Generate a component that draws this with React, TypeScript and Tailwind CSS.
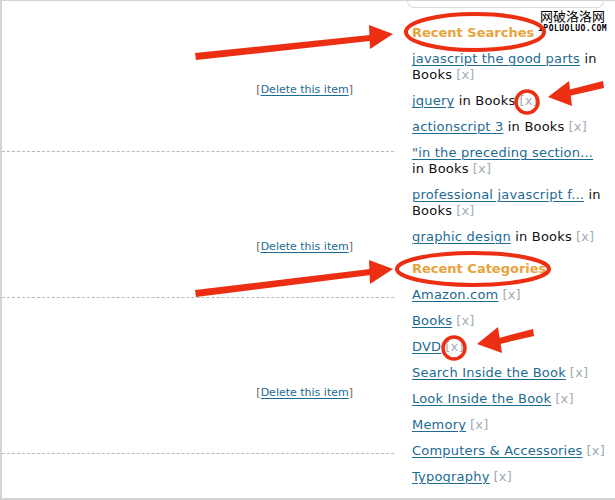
import React from 'react';

const link = 'text-[#1d6a93] underline decoration-1 underline-offset-2';
const xBtn = 'text-[#a3acb3] ml-1';

const searches = [
  'javascript the good parts',
  'jquery',
  'actionscript 3',
  '"in the preceding section...',
  'professional javascript f...',
  'graphic design',
];

const categories = [
  'Amazon.com',
  'Books',
  'DVD',
  'Search Inside the Book',
  'Look Inside the Book',
  'Memory',
  'Computers & Accessories',
  'Typography',
];

const DeleteItem: React.FC<{ top: string }> = ({ top }) => (
  <div className={`flex justify-end pr-[41px] ${top} text-[11px] leading-[14px]`}>
    <span className="text-[#666]">[</span>
    <a className={link}>Delete this item</a>
    <span className="text-[#666]">]</span>
  </div>
);

const Annotations = () => (
  <svg className="absolute inset-0 pointer-events-none" width="615" height="500" viewBox="0 0 615 500">
    <g fill="#ec2f12" stroke="none">
      <polygon points="193,52 368,34 368,40 194,59" />
      <polygon points="367,24 391,33 368,48" />
      <polygon points="193,289 368,268 369,274 194,296" />
      <polygon points="367,259 391,268 368,283" />
      <polygon points="601,80 566,89 567,95 602,87" />
      <polygon points="567,80 546,96 570,105" />
      <polygon points="531,328 497,337 498,343 532,335" />
      <polygon points="496,326 475,343 500,352" />
    </g>
    <g fill="none" stroke="#ec2f12">
      <ellipse cx="473" cy="31" rx="69" ry="18" strokeWidth="4" />
      <ellipse cx="471" cy="268" rx="76" ry="16" strokeWidth="4" />
      <circle cx="525" cy="101" r="11" strokeWidth="3.5" />
      <circle cx="452" cy="347" r="11" strokeWidth="3.5" />
    </g>
  </svg>
);

export default function App() {
  return (
    <div className="relative w-[615px] h-[500px] overflow-hidden bg-white border-l-2 border-t border-b-2 border-[#d4d4d4] font-['DejaVu_Sans',Verdana,sans-serif]">
      <div className="flex h-full">
        <div className="w-[392px] shrink-0 flex flex-col">
          <div className="h-[151px] border-b border-dashed border-[#b9b9b9]">
            <DeleteItem top="pt-[82px]" />
          </div>
          <div className="h-[146px] border-b border-dashed border-[#b9b9b9]">
            <DeleteItem top="pt-[88px]" />
          </div>
          <div className="h-[156px] border-b border-dashed border-[#b9b9b9]">
            <DeleteItem top="pt-[88px]" />
          </div>
        </div>
        <div className="pl-[18px] w-[213px] text-[13px] leading-[16px] tracking-[0.2px] text-[#111]">
          <div className="ml-[-5px] w-[197px] h-[7px] border-x border-b border-[#dcdcdc] rounded-b-lg" />
          <div className="mt-[17px] mb-[10px] font-bold tracking-normal text-[#e8a33c]">Recent Searches</div>
          {searches.map((q) => (
            <p key={q} className="mb-[10px]">
              <a className={link}>{q}</a> <span>in Books</span>
              <span className={xBtn}>[x]</span>
            </p>
          ))}
          <div className="mt-[16px] mb-[10px] font-bold tracking-normal text-[#e8a33c]">Recent Categories</div>
          {categories.map((c) => (
            <p key={c} className="mb-[10px] whitespace-nowrap">
              <a className={link}>{c}</a>
              <span className={xBtn}>[x]</span>
            </p>
          ))}
        </div>
      </div>
      <div className="absolute top-[8px] left-[536px] flex flex-col items-center leading-none">
        <span className="text-[13px] text-black font-['Noto_Sans_CJK_SC',sans-serif]">网破洛洛网</span>
        <span className="mt-[3px] text-[8px] font-bold tracking-[0.5px] text-black font-['DejaVu_Sans_Mono',monospace]">iPOLUOLUO.COM</span>
      </div>
      <Annotations />
    </div>
  );
}
